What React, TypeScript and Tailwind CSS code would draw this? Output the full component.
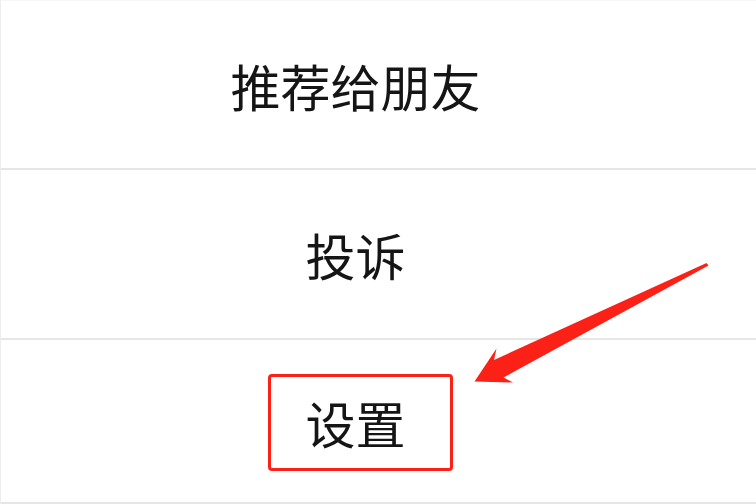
import React from "react";

const font = { fontFamily: '"Noto Sans CJK SC", "Noto Sans", sans-serif' };

export default function App() {
  return (
    <div className="relative w-[756px] h-[504px] bg-white overflow-hidden" style={font}>
      <div className="flex flex-col border-l border-[#ececec]">
        <div className="h-[168px] flex items-center justify-center pr-[46px] border-t border-[#f6f6f6]">
          <span className="text-[50px] leading-none font-normal text-[#151515]">推荐给朋友</span>
        </div>
        <div className="h-[2px] bg-[#e6e6e6]" />
        <div className="h-[168px] flex items-center justify-center pr-[46px]">
          <span className="text-[50px] leading-none font-normal text-[#151515]">投诉</span>
        </div>
        <div className="h-[2px] bg-[#e6e6e6]" />
        <div className="relative h-[162px] flex items-center justify-center pr-[46px]">
          <span className="text-[50px] leading-none font-normal text-[#151515] pt-[2px]">设置</span>
          <div className="absolute left-[267px] top-[34px] w-[185px] h-[97px] border-[3px] border-[#fb2117] rounded-[4px]" />
        </div>
        <div className="h-[2px] bg-[#e6e6e6]" />
      </div>
      <svg className="absolute left-0 top-0" width="756" height="504" viewBox="0 0 756 504">
        <polygon
          points="706.5,263 708.5,265.5 503.5,377.5 513,382.5 474.5,381.5 496.5,348.5 494,360"
          fill="#fb2117"
        />
      </svg>
    </div>
  );
}
